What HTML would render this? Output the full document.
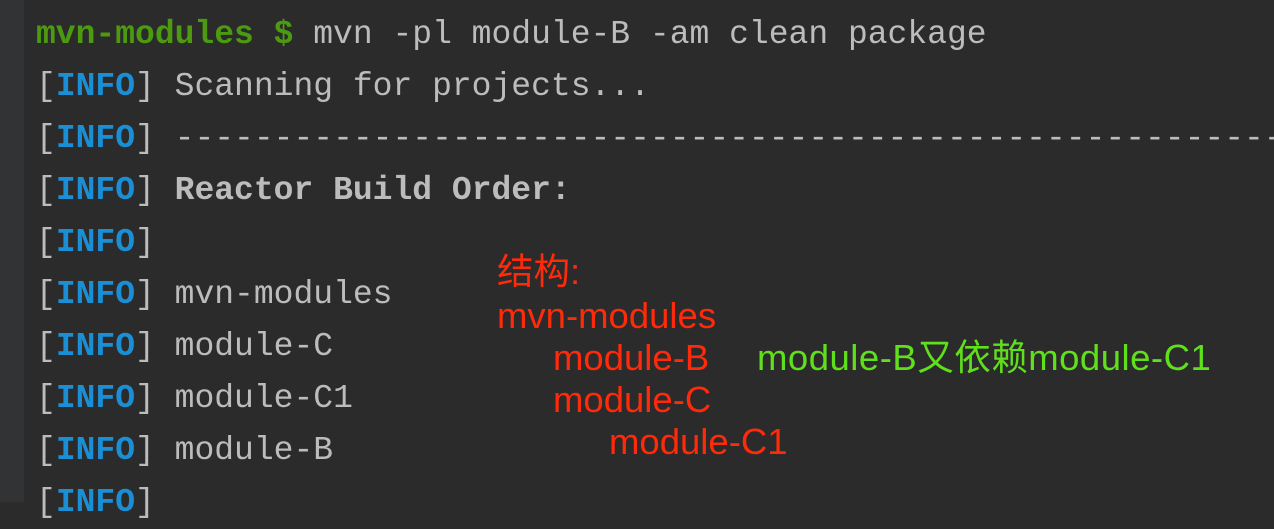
<!DOCTYPE html>
<html><head><meta charset="utf-8"><style>
html,body{margin:0;padding:0;}
body{width:1274px;height:502px;overflow:hidden;background:#2b2b2b;position:relative;}
.gut{position:absolute;left:0;top:0;width:24px;height:502px;background:#313335;}
.t{position:absolute;left:36px;font-family:"Liberation Mono",monospace;font-size:33px;color:#bcbcbc;white-space:pre;line-height:52px;}
.g{color:#4c9a10;font-weight:bold}
.b{color:#1a8fd6;font-weight:bold}
.bo{font-weight:bold}
.a{position:absolute;font-family:"Liberation Sans","Noto Sans CJK SC",sans-serif;font-size:36.5px;color:#ff2a0a;white-space:pre;line-height:42px;}
.gr{color:#5fe01a}
</style></head><body>
<div class="gut"></div>
<div class="t" style="top:9px"><span class="g">mvn-modules $</span> mvn -pl module-B -am clean package</div>
<div class="t" style="top:61px">[<span class="b">INFO</span>] Scanning for projects...</div>
<div class="t" style="top:113px">[<span class="b">INFO</span>] --------------------------------------------------------</div>
<div class="t" style="top:165px">[<span class="b">INFO</span>] <span class="bo">Reactor Build Order:</span></div>
<div class="t" style="top:217px">[<span class="b">INFO</span>]</div>
<div class="t" style="top:269px">[<span class="b">INFO</span>] mvn-modules</div>
<div class="t" style="top:321px">[<span class="b">INFO</span>] module-C</div>
<div class="t" style="top:373px">[<span class="b">INFO</span>] module-C1</div>
<div class="t" style="top:425px">[<span class="b">INFO</span>] module-B</div>
<div class="t" style="top:477px">[<span class="b">INFO</span>]</div>
<div class="a" style="left:497px;top:251px">结构:</div>
<div class="a" style="left:497px;top:295px">mvn-modules</div>
<div class="a" style="left:553px;top:337px">module-B</div>
<div class="a gr" style="left:757px;top:337px;letter-spacing:0.5px">module-B又依赖module-C1</div>
<div class="a" style="left:553px;top:379px">module-C</div>
<div class="a" style="left:609px;top:421px">module-C1</div>
</body></html>
